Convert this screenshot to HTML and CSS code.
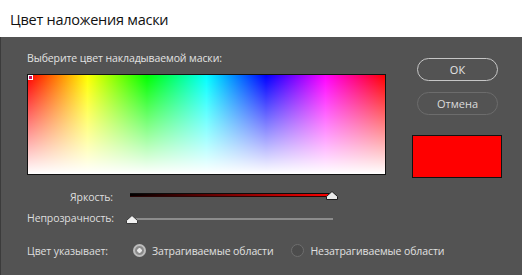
FILE: index.html
```html
<!DOCTYPE html>
<html lang="ru">
<head>
<meta charset="utf-8">
<link rel="stylesheet" href="styles.css">
</head>
<body>
<div class="dialog">
  <div class="titlebar"><span class="title">Цвет наложения маски</span></div>
  <div class="panel">
    <div class="main">
      <div class="prompt">Выберите цвет накладываемой маски:</div>
      <div class="picker">
        <div class="picker-white"></div>
        <div class="marker"></div>
      </div>
      <div class="controls">
        <div class="label">Яркость:</div>
        <div class="slider bright">
          <div class="track bright-track"></div>
          <svg class="thumb thumb-bright" width="12" height="9" viewBox="0 0 12 9"><path d="M6 0.5 L11.5 5.5 L11.5 8.5 L0.5 8.5 L0.5 5.5 Z" fill="#e9e9e9" stroke="#1c1c1c" stroke-width="1"/></svg>
        </div>
        <div class="label">Непрозрачность:</div>
        <div class="slider opac">
          <div class="track opac-track"></div>
          <svg class="thumb thumb-opac" width="12" height="9" viewBox="0 0 12 9"><path d="M6 0.5 L11.5 5.5 L11.5 8.5 L0.5 8.5 L0.5 5.5 Z" fill="#f2f2f2" stroke="#3a3a3a" stroke-width="1"/></svg>
        </div>
      </div>
      <div class="radio-row">
        <div class="label left">Цвет указывает:</div>
        <label class="radio first"><span class="dot on"></span><span>Затрагиваемые области</span></label>
        <label class="radio second"><span class="dot"></span><span>Незатрагиваемые области</span></label>
      </div>
    </div>
    <div class="side">
      <button class="btn ok">ОК</button>
      <button class="btn cancel">Отмена</button>
      <div class="swatch"></div>
    </div>
  </div>
</div>
</body>
</html>
```

FILE: styles.css
```css
* { box-sizing: border-box; }
html, body { margin: 0; padding: 0; }
body {
  width: 522px;
  height: 275px;
  overflow: hidden;
  font-family: "Open Sans", "Noto Sans", sans-serif;
  background: #535353;
}
.dialog { width: 522px; height: 275px; display: flex; flex-direction: column; }
.titlebar {
  height: 37px;
  background: #ffffff;
  padding-left: 10px;
  display: flex;
  align-items: center;
  flex-shrink: 0;
}
.title {
  font-size: 14.5px;
  color: #111111;
  letter-spacing: -0.25px;
  padding-top: 1px;
  white-space: nowrap;
}
.panel {
  flex: 1;
  background: #535353;
  border-left: 1px solid #3b3b3b;
  display: flex;
  padding-left: 26px;
}
.main { width: 360px; flex-shrink: 0; display: flex; flex-direction: column; }
.prompt {
  margin-top: 14px;
  height: 14px;
  line-height: 14px;
  font-size: 10.5px;
  letter-spacing: -0.1px;
  color: #e2e2e2;
  white-space: nowrap;
}
.picker {
  position: relative;
  margin-top: 9px;
  width: 359px;
  height: 101px;
  border: 1px solid #111;
  background: linear-gradient(to right, #ff0000 0%, #ffff00 16.67%, #00ff00 33.33%, #00ffff 50%, #0000ff 66.67%, #ff00ff 83.33%, #ff0000 100%);
}
.picker-white {
  width: 100%;
  height: 100%;
  background: linear-gradient(to bottom, rgba(255,255,255,0) 0%, #ffffff 100%);
}
.marker {
  position: absolute;
  left: 0;
  top: 0;
  width: 5px;
  height: 5px;
  border: 1px solid #fff;
  background: #d0105a;
}
.controls {
  margin-top: 11px;
  display: grid;
  grid-template-columns: 86px 205px;
  grid-template-rows: 21px 22px;
  column-gap: 17px;
  align-items: center;
}
.label {
  font-size: 10.5px;
  letter-spacing: -0.1px;
  color: #dedede;
  text-align: right;
  line-height: 14px;
  white-space: nowrap;
}
.label.left { text-align: left; width: 86px; flex-shrink: 0; }
.slider { position: relative; height: 21px; }
.track { position: absolute; left: 0; }
.bright-track {
  top: 7px;
  width: 202px;
  height: 4px;
  border-top: 1px solid #0c0c0c;
  border-bottom: 1px solid #2a0505;
  background: linear-gradient(to right, #000000, #ff0000);
}
.opac-track {
  top: 10px;
  width: 203px;
  height: 2px;
  background: #8c8c8c;
}
.thumb { position: absolute; display: block; }
.thumb-bright { left: 196px; top: 5px; }
.thumb-opac { left: -4px; top: 7px; }
.radio-row {
  margin-top: 11px;
  height: 21px;
  display: flex;
  align-items: center;
  white-space: nowrap;
}
.radio {
  display: flex;
  align-items: center;
  font-size: 10.5px;
  letter-spacing: -0.1px;
  color: #e0e0e0;
  flex-shrink: 0;
  white-space: nowrap;
}
.radio.first { margin-left: 20px; }
.radio.second { margin-left: 18px; }
.dot {
  width: 13px;
  height: 13px;
  border-radius: 50%;
  margin-right: 6px;
  background: #4c4c4c;
  border: 1px solid #6e6e6e;
  flex-shrink: 0;
}
.dot.on {
  border: 2px solid #bdbdbd;
  background: radial-gradient(circle, #e8e8e8 0 2px, #8a8a8a 2.5px 100%);
}
.side {
  margin-left: 25px;
  display: flex;
  flex-direction: column;
  align-items: flex-start;
}
.btn {
  font-family: inherit;
  width: 81px;
  height: 23px;
  border-radius: 12px;
  background: transparent;
  font-size: 11px;
  color: #e6e6e6;
  padding: 0;
  margin-left: 5px;
}
.ok { margin-top: 21px; border: 1.5px solid #c6c6c6; }
.cancel { margin-top: 11px; border: 1.5px solid #6c6c6c; color: #dcdcdc; }
.swatch {
  margin-top: 20px;
  width: 90px;
  height: 43px;
  background: #ff0000;
  border: 1px solid #111;
}
```
